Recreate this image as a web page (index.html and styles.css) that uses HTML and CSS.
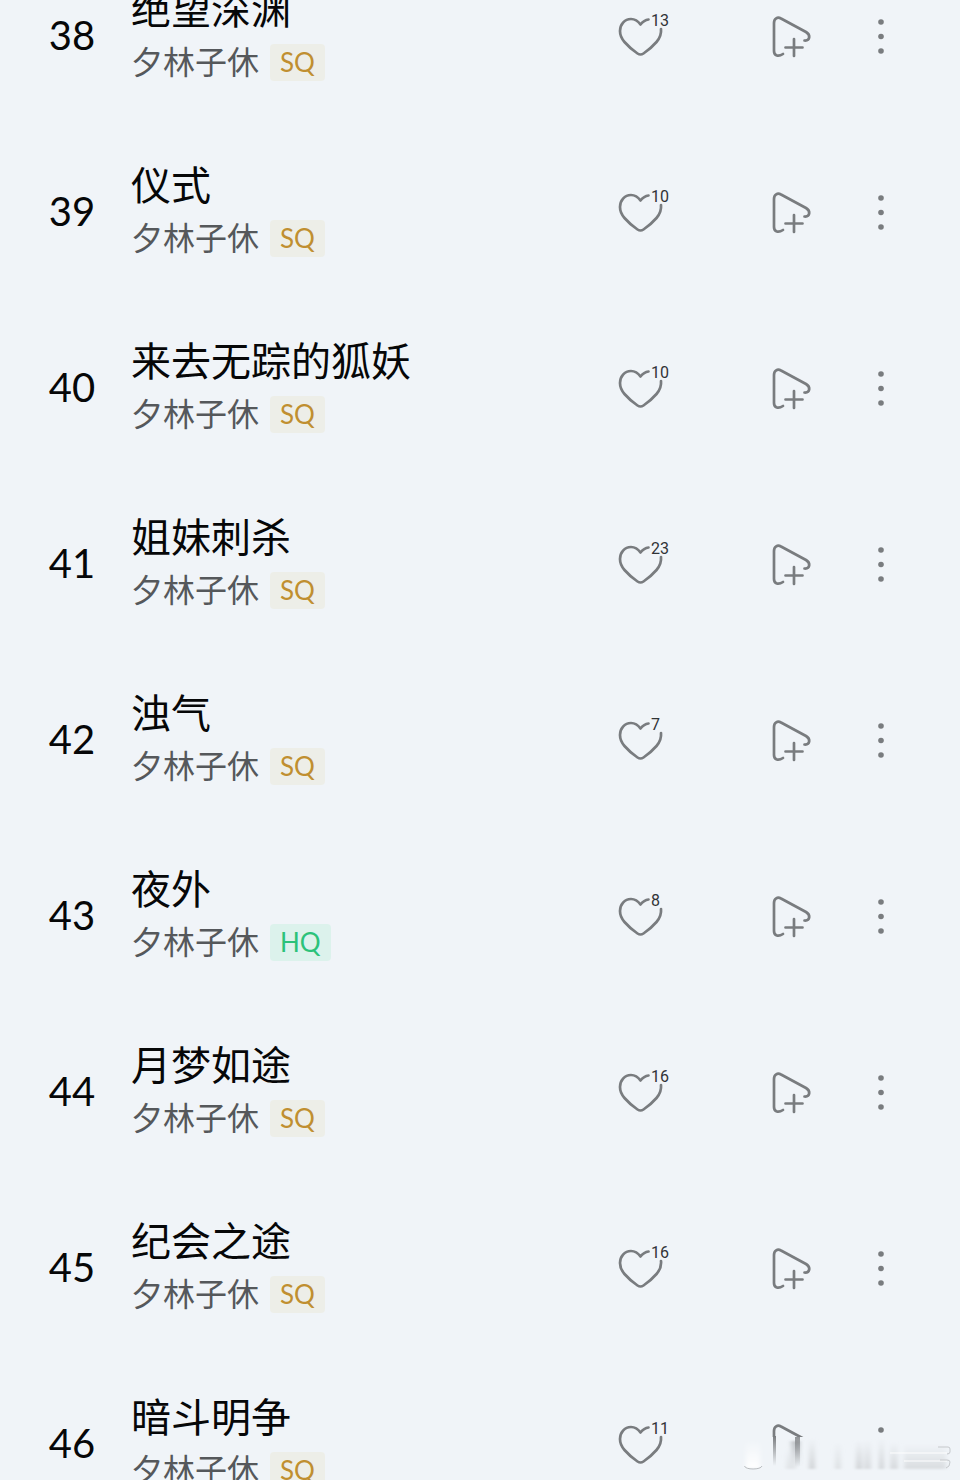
FILE: index.html
```
<!DOCTYPE html>
<html lang="zh-CN">
<head>
    <meta charset="UTF-8">
    <meta name="viewport" content="width=device-width, initial-scale=1.0">
    <title>夕林子休</title>
    <link rel="stylesheet" href="styles.css">
</head>
<body>
    <svg class="sprite" aria-hidden="true">
        <symbol id="icon-heart" viewBox="0 0 46 44">
            <path d="M30.500 5.500C27 6 24.500 8 22.500 10.500C20 7 16.500 5 13 5C6.500 5 2 10.500 2 17C2 21 3.500 24.500 6.500 28C10 32 15 36.500 19.500 39.500Q22.500 41.500 25.500 39.500C30 36.500 35 32 38.500 28C42 24 43.500 20 43 15"/>
        </symbol>
        <symbol id="icon-add" viewBox="0 0 44 44">
            <path d="M13 40C8.500 43 4 42 4 37V9C4 4.500 7.500 2.500 11 4.500L36 18C41 21 40 27 34.500 26.500M24 25V42M15.500 33.500H32.500"/>
        </symbol>
        <symbol id="icon-more" viewBox="0 0 22 44">
            <circle cx="11" cy="8" r="2.800"/>
            <circle cx="11" cy="22.500" r="2.800"/>
            <circle cx="11" cy="37" r="2.800"/>
        </symbol>
    </svg>

    <ol class="song-list" id="song-list"></ol>

    <svg class="smudge" viewBox="0 0 220 44" aria-hidden="true">
        <defs>
            <linearGradient id="fade" x1="0" y1="0" x2="0" y2="1">
                <stop offset="0" stop-color="#797c7f"/>
                <stop offset="1" stop-color="#797c7f" stop-opacity="0"/>
            </linearGradient>
            <linearGradient id="haze" x1="0" y1="0" x2="0" y2="1">
                <stop offset="0" stop-color="#d0d3d6" stop-opacity="0"/>
                <stop offset="1" stop-color="#d0d3d6"/>
            </linearGradient>
            <linearGradient id="shine" x1="0" y1="0" x2="0" y2="1">
                <stop offset="0" stop-color="#fff" stop-opacity="0"/>
                <stop offset="1" stop-color="#fff"/>
            </linearGradient>
            <filter id="soft" x="-20%" y="-20%" width="140%" height="140%">
                <feGaussianBlur stdDeviation="2 1"/>
            </filter>
        </defs>
        <rect y="1" width="220" height="43" fill="#f0f4f8"/>
        <rect x="33" y="0" width="3" height="30" fill="url(#fade)"/>
        <rect x="55" y="1" width="5" height="30" fill="url(#fade)" opacity=".8"/>
        <g filter="url(#soft)">
            <rect x="51" y="5" width="9" height="26" fill="url(#fade)" opacity=".4"/>
            <rect x="46" y="12" width="10" height="21" fill="url(#haze)" opacity=".5"/>
            <rect x="6" y="4" width="14" height="28" fill="url(#shine)"/>
            <rect x="69" y="2" width="6" height="31" fill="url(#haze)"/>
            <rect x="95" y="6" width="6" height="27" fill="url(#haze)" opacity=".6"/>
            <rect x="116" y="4" width="6" height="29" fill="url(#haze)"/>
            <rect x="124" y="4" width="7" height="29" fill="url(#haze)" opacity=".8"/>
            <rect x="139" y="2" width="5" height="31" fill="url(#haze)"/>
            <rect x="150" y="6" width="8" height="27" fill="url(#haze)" opacity=".8"/>
            <rect x="164" y="8" width="42" height="25" fill="url(#haze)" opacity=".7"/>
        </g>
        <path d="M150 17H207M164 25H207" stroke="#fff" stroke-width="2" opacity=".5"/>
        <path d="M4.500 30C5 34 21 34 22 30" fill="none" stroke="#b9bcbf"/>
        <path d="M198 11H208Q210 11 210 13V16Q210 18 207 18M200 24H207Q210 24 210 26Q210 31 206 32" fill="none" stroke="#c6c9cc"/>
    </svg>

    <script>
        const songs = [
            { no: 38, title: "绝望深渊", likes: 13, quality: "SQ" },
            { no: 39, title: "仪式", likes: 10, quality: "SQ" },
            { no: 40, title: "来去无踪的狐妖", likes: 10, quality: "SQ" },
            { no: 41, title: "姐妹刺杀", likes: 23, quality: "SQ" },
            { no: 42, title: "浊气", likes: 7, quality: "SQ" },
            { no: 43, title: "夜外", likes: 8, quality: "HQ" },
            { no: 44, title: "月梦如途", likes: 16, quality: "SQ" },
            { no: 45, title: "纪会之途", likes: 16, quality: "SQ" },
            { no: 46, title: "暗斗明争", likes: 11, quality: "SQ" }
        ];

        document.querySelector("#song-list").innerHTML = songs.map(song => `
            <li class="song">
                <span class="number">${song.no}</span>
                <div class="info">
                    <div class="title">${song.title}</div>
                    <div class="meta">
                        <span class="artist">夕林子休</span>
                        <span class="badge ${song.quality.toLowerCase()}">${song.quality}</span>
                    </div>
                </div>
                <button type="button" class="like-btn" aria-label="喜欢 ${song.likes}">
                    <svg width="46" height="44"><use href="#icon-heart"/></svg>
                    <span class="count">${song.likes}</span>
                </button>
                <button type="button" class="add-btn" aria-label="添加到播放列表">
                    <svg width="44" height="44"><use href="#icon-add"/></svg>
                </button>
                <button type="button" class="more-btn" aria-label="更多">
                    <svg width="22" height="44"><use href="#icon-more"/></svg>
                </button>
            </li>
        `).join("");
    </script>
</body>
</html>
```
FILE: styles.css
```
body {
    position: relative;
    height: 100vh;
    margin: 0;
    overflow: hidden;
    background: #f0f4f8;
    color: #060708;
    font-family: Lato, "Noto Sans CJK SC", sans-serif;
}

.sprite {
    display: none;
}

/* the list is scrolled part way through the first row */
.song-list {
    margin: -51px 0 0;
    padding: 0;
    list-style: none;
}

.song {
    display: flex;
    align-items: center;
    height: 176px;
    padding: 0 68px 0 48px;
}

.number {
    width: 48px;
    margin-right: 35px;
    padding-bottom: 4px;
    font-size: 40px;
    text-align: center;
}

.info {
    flex: 1;
    padding-bottom: 12px;
}

.title {
    margin-bottom: 6px;
    font-size: 40px;
    line-height: 56px;
    white-space: nowrap;
}

.meta {
    display: flex;
    align-items: center;
    gap: 11px;
}

.artist {
    color: #55585b;
    font-size: 32px;
    line-height: 38px;
}

.badge {
    padding: 0 10px;
    border-radius: 4px;
    font-size: 26px;
    line-height: 37px;
}

.badge.sq {
    background: #edeee8;
    color: #c08f30;
}

.badge.hq {
    background: #dcf2ec;
    color: #2bc27a;
}

button {
    position: relative;
    padding: 0 0 2px;
    border: none;
    background: none;
    cursor: pointer;
}

button svg {
    display: block;
    fill: none;
    stroke: #797c7f;
    stroke-width: 2.7;
    stroke-linecap: round;
    stroke-linejoin: round;
}

.like-btn {
    margin-right: 106px;
}

.add-btn {
    margin-right: 56px;
}

.more-btn svg {
    fill: #797c7f;
    stroke: none;
}

.count {
    position: absolute;
    top: -1px;
    left: 33px;
    color: #303336;
    font-family: Roboto, sans-serif;
    font-size: 16px;
    line-height: 16px;
}

.smudge {
    position: absolute;
    right: 0;
    bottom: 0;
    width: 220px;
    height: 44px;
}
```
